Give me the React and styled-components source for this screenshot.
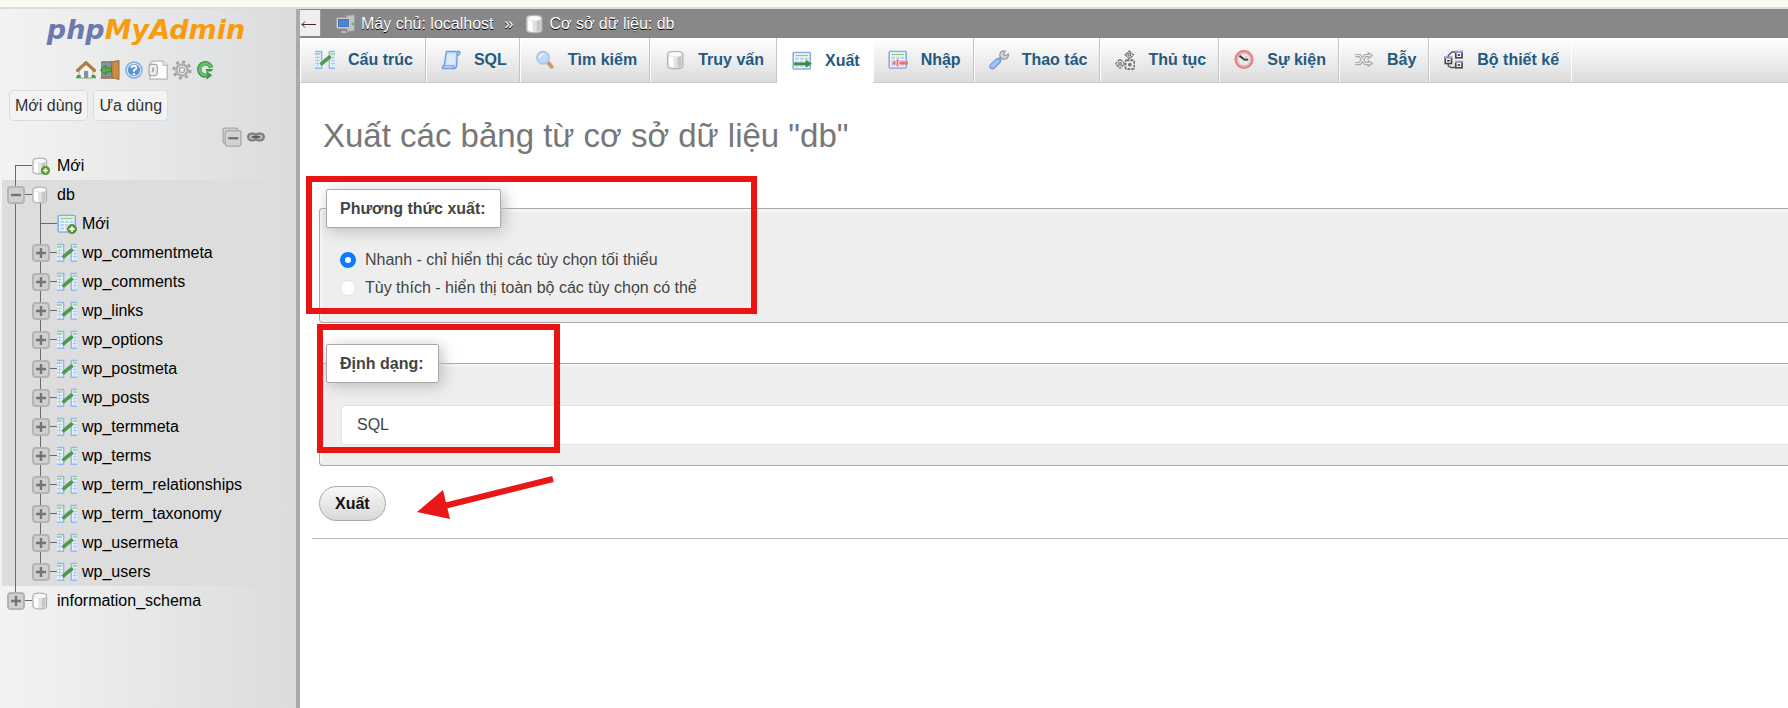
import React from "react";
import styled, { createGlobalStyle } from "styled-components";

const GlobalStyle = createGlobalStyle`
  *, *::before, *::after { box-sizing: border-box; }
  body {
    margin: 0;
    background: #fff;
    color: #444;
    font-family: "Liberation Sans", Arial, sans-serif;
    font-size: 16px;
    line-height: 20px;
  }
  a { color: inherit; text-decoration: none; }
  button, input, select { font: inherit; }
`;

/* ---------- page frame ---------- */

const Page = styled.div`
  min-height: 100vh;
  display: flex;
  flex-direction: column;
  overflow: hidden;
`;

const TopStrip = styled.div`
  height: 9px;
  background: #f9fbf1;
  border-bottom: 2px solid #dcded8;
`;

const Body = styled.div`
  flex: 1;
  display: flex;
`;

const Sidebar = styled.nav`
  flex: none;
  width: 300px;
  border-right: 4px solid #aaa;
  background: linear-gradient(to right, #f3f3f3, #dadcdd);
  color: #000;
`;

const Main = styled.main`
  flex: 1;
  min-width: 0;
`;

/* ---------- sidebar ---------- */

const Logo = styled.a`
  display: block;
  padding: 0 4px 0 0;
  text-align: center;
  font: italic 700 27px/42px "DejaVu Sans", sans-serif;
  color: #6c78af;
  span { color: #f89c0e; }
`;

const QuickLinks = styled.div`
  display: flex;
  justify-content: center;
  gap: 4px;
  padding: 9px 4px 0 0;
  a { display: flex; }
`;

const PillRow = styled.div`
  display: flex;
  gap: 5px;
  padding: 10px 9px 0;
`;

const Pill = styled.button`
  height: 31px;
  padding: 0 5px;
  border: 1px solid #dcdcdc;
  border-radius: 4px;
  background: #f3f3f3;
  color: #333;
  cursor: pointer;
`;

const TreeTools = styled.div`
  display: flex;
  justify-content: flex-end;
  align-items: center;
  gap: 5px;
  padding: 6px 31px 4px 0;
  a { display: flex; }
`;

const lineColor = "#6a6a6a";

const Tree = styled.ul`
  list-style: none;
  margin: 0;
  padding: 0;
`;

const OpenBranch = styled.li`
  margin: 0 24px 0 2px;
  background: #dddddd;
`;

const SubTree = styled.ul`
  list-style: none;
  margin: 0;
  padding: 0 0 0 5px;
  background: linear-gradient(${lineColor}, ${lineColor}) 13px 0 / 1px 100% no-repeat;
`;

const Row = styled.div`
  display: flex;
  align-items: center;
  height: 29px;
  padding-left: ${(p) => p.$indent}px;
`;

const spans = {
  full: "0 / 1px 100%",
  top: "0 / 1px 50%",
  bottom: "100% / 1px 50%",
};

const Joint = styled.span`
  display: flex;
  align-items: center;
  width: 25px;
  height: 29px;
  background:
    linear-gradient(${lineColor}, ${lineColor}) 8px ${(p) => spans[p.$span]} no-repeat,
    linear-gradient(${lineColor}, ${lineColor}) 8px 14px / 17px 1px no-repeat;
`;

const NodeIcon = styled.span`
  display: flex;
  align-items: center;
  width: 25px;
  height: 29px;
  ${(p) =>
    p.$stem &&
    `background: linear-gradient(${lineColor}, ${lineColor}) 8px 100% / 1px 50% no-repeat;`}
`;

const Expander = styled.button`
  display: flex;
  align-items: center;
  justify-content: center;
  width: 18px;
  height: 18px;
  padding: 0;
  border: 2px solid #b4b4b4;
  border-radius: 4px;
  background: #d0d0d0;
  cursor: pointer;
`;

/* ---------- header ---------- */

const Crumbs = styled.div`
  display: flex;
  align-items: center;
  height: 29px;
  background: #888;
  color: #fff;
  text-shadow: 0 1px 0 #000;
`;

const BackButton = styled.button`
  align-self: flex-start;
  width: 21px;
  height: 26px;
  margin: 1px 15px 0 0;
  padding: 0;
  border: 0;
  border-right: 1px solid #999;
  background: #eee;
  color: #502030;
  cursor: pointer;
  svg { display: block; }
`;

const Crumb = styled.a`
  display: flex;
  align-items: center;
  gap: 5px;
`;

const CrumbSep = styled.span`
  padding: 0 11px;
`;

const TabBar = styled.ul`
  display: flex;
  list-style: none;
  margin: 0;
  padding: 0;
  height: 45px;
  background: linear-gradient(#ffffff, #dcdcdd);
  border-bottom: 1px solid #ccc;
`;

const Tab = styled.li`
  display: flex;
  height: ${(p) => (p.$active ? 45 : 44)}px;
  border-left: 1px solid #fff;
  border-right: 1px solid ${(p) => (p.$active ? "#fff" : "#c4c4c4")};
  background: ${(p) => (p.$active ? "#fff" : "transparent")};
  &:last-child { border-right-color: #fff; }
  a {
    display: flex;
    align-items: center;
    gap: 13px;
    padding: 0 12px 0 14px;
    color: #235a81;
    font-weight: bold;
    white-space: nowrap;
  }
`;

/* ---------- export form ---------- */

const Content = styled.form`
  position: relative;
  padding: 0 0 0 12px;
`;

const Title = styled.h2`
  margin: 0;
  padding: 32px 11px 0;
  font-size: 33px;
  line-height: 42px;
  font-weight: 400;
  color: #777;
`;

const Panel = styled.fieldset`
  min-width: 0;
  margin: ${(p) => p.$gap}px 0 0 7px;
  padding: ${(p) => p.$top}px 0 ${(p) => p.$bottom}px 6px;
  border: 1px solid #aaa;
  border-right: 0;
  border-radius: 4px 0 0 4px;
  background: #eee;
  box-shadow: inset 2px 3px 0 #f5f5f5;
`;

const Legend = styled.legend`
  padding: 0 14px 0 13px;
  border: 1px solid #aaa;
  border-radius: 2px;
  background: #fff;
  box-shadow: 3px 3px 15px #bbb;
  font-weight: bold;
  line-height: 37px;
`;

const Choice = styled.label`
  display: flex;
  align-items: center;
  gap: 9px;
  height: 28px;
  padding-left: 14px;
`;

const Radio = styled.input`
  appearance: none;
  width: 16px;
  height: 16px;
  margin: 0;
  border: 1px solid #e4e4e4;
  border-radius: 50%;
  background: #fff;
  &:checked { border: 5px solid #0d7bff; }
`;

const FormatSelect = styled.select`
  appearance: none;
  display: block;
  width: calc(100% - 15px);
  height: 40px;
  margin-left: 15px;
  padding: 0 15px;
  border: 1px solid #e2e4e6;
  border-right: 0;
  border-radius: 4px 0 0 4px;
  background: #fff;
  color: #444;
`;

const SubmitRow = styled.div`
  padding: 20px 0 17px 7px;
  border-bottom: 1px solid #bbb;
`;

const Submit = styled.button`
  display: block;
  height: 35px;
  padding: 0 15px;
  border: 1px solid #aaa;
  border-radius: 18px;
  background: linear-gradient(#f8f8f8, #d8d8d8);
  color: #111;
  font-weight: bold;
  cursor: pointer;
`;

/* ---------- red call-outs over the form ---------- */

const Frame = styled.div`
  position: absolute;
  left: ${(p) => p.$x}px;
  top: ${(p) => p.$y}px;
  width: ${(p) => p.$w}px;
  height: ${(p) => p.$h}px;
  border: 6px solid #ec1313;
  pointer-events: none;
`;

const Arrow = styled.svg`
  position: absolute;
  left: 116px;
  top: 390px;
  pointer-events: none;
`;

/* ---------- icons ---------- */

const Icon = ({ size = 20, children }) => (
  <svg width={size} height={size} viewBox="0 0 16 16" fill="none" aria-hidden="true">
    {children}
  </svg>
);

const Cylinder = ({ x = 1.5 }) => (
  <g transform={`translate(${x} 0)`}>
    <path d="M.6 3.2C.6 .3 12.8 .3 12.8 3.2V12.8C12.8 15.8 .6 15.8 .6 12.8Z" fill="#e2e2e2" stroke="#b4b4b4" />
    <path d="M1.6 4.6Q3 5.5 5.4 5.7V14.2Q2.4 13.9 1.6 12.6Z" fill="#fff" />
    <path d="M8.6 5.6Q10.8 5.3 11.8 4.5V12.8Q10.8 13.8 8.6 14.1Z" fill="#c6c6c6" />
    <ellipse cx="6.7" cy="3.4" rx="5.3" ry="1.8" fill="#f9f9f9" />
  </g>
);

const Plus = () => (
  <g>
    <circle cx="12" cy="12" r="3.6" fill="#5d9c35" stroke="#3f7d22" strokeWidth=".6" />
    <path d="M12 9.9v4.2M9.9 12h4.2" stroke="#fff" strokeWidth="1.5" />
  </g>
);

const Grid = () => (
  <g>
    <rect x="1" y="1.2" width="13.6" height="13.2" rx=".8" fill="#fff" stroke="#86abe2" strokeWidth="1.3" />
    <path d="M2.6 3.6h10.4" stroke="#8ccf6e" strokeWidth="1.2" />
    <rect x="2.4" y="5.2" width="10.8" height="7.8" fill="#bfd4f5" />
    <path d="M2.4 7.6h10.8M2.4 10.2h10.8M6 5.2v7.8M9.6 5.2v7.8" stroke="#f4f8ff" strokeWidth=".8" />
  </g>
);

const DbIcon = () => <Icon><Cylinder /></Icon>;
const TreeDbIcon = () => <Icon size={18}><Cylinder x={0.2} /></Icon>;
const NewDbIcon = () => <Icon size={18}><Cylinder x={0.2} /><Plus /></Icon>;
const NewTableIcon = () => <Icon><Grid /><Plus /></Icon>;

const StructureIcon = () => (
  <Icon>
    <path d="M0 1.2h5.3V14.6H0M16 1.2h-4.6V14.6H16" fill="#e6f0fd" stroke="#93b7ea" strokeWidth="1.1" />
    <path d="M0 3.2h3.8M12.6 3.2H16" stroke="#8ed070" strokeWidth="1.3" />
    <path d="M0 6h4M0 8.4h4M0 10.8h4M2 4.8v8.6M12.7 6H16M12.7 8.4H16M12.7 10.8H16M14.3 4.8v8.6" stroke="#aecaf0" strokeWidth=".7" />
    <path d="M5.4 10.9 8 8.6 11.6 5.8" stroke="#4f9a4a" strokeWidth="2.9" strokeLinecap="round" strokeLinejoin="round" />
  </Icon>
);

const SqlIcon = () => (
  <Icon>
    <path d="M4.2 1.2H14.6Q16 2.6 14.2 4H13L12.4 13Q12 14.8 10.2 14.8H1.4Q.6 13 2.6 12.4Z" fill="#c4dcfb" stroke="#6d9de0" strokeWidth="1.1" strokeLinejoin="round" />
    <path d="M5.4 3H11.6L10.8 12H4.2Z" fill="#dcebff" />
    <path d="M2.2 12.6H10Q9.8 14.4 11 14.6M12.8 4Q12.4 2 14 1.4" stroke="#6d9de0" strokeWidth=".9" />
  </Icon>
);

const SearchIcon = () => (
  <Icon>
    <path d="M10.2 9.8 13.4 13.4" stroke="#c99a5c" strokeWidth="3" strokeLinecap="round" />
    <circle cx="6.4" cy="6.2" r="4.9" fill="#bcdcfb" stroke="#b3c3e4" strokeWidth="1.3" />
    <path d="M3.6 6Q4 3.4 6.6 3.2" stroke="#eaf5ff" strokeWidth="1.4" strokeLinecap="round" />
  </Icon>
);

const ExportIcon = () => (
  <Icon>
    <Grid />
    <path d="M1.6 9.2H11V7L15.9 10.2 11 13.4V11.4H1.6Z" fill="#3f8a3a" />
  </Icon>
);

const ImportIcon = () => (
  <Icon>
    <Grid />
    <path d="M16 9.2H8.4V7L3 10.4 8.4 13.6V11.6H16Z" fill="#fa6b6b" />
    <path d="M6.4 8.6v3.8M8.6 9v3" stroke="#fff" strokeWidth=".7" />
  </Icon>
);

const WrenchIcon = () => (
  <Icon>
    <path d="M7.6 8.4 11 5" stroke="#a3a3a3" strokeWidth="3" />
    <path d="M13 .8Q9.2.2 8.6 3.6 8.8 7 12 7.4 15.8 7 15.6 3L13 4.6 11.6 3.4Z" fill="#d4d4d4" stroke="#999" strokeWidth=".9" strokeLinejoin="round" />
    <path d="M2.8 13 7 9" stroke="#6f95dc" strokeWidth="5" strokeLinecap="round" />
    <path d="M2.8 12.8 7 8.8" stroke="#a3c0f2" strokeWidth="3.2" strokeLinecap="round" />
  </Icon>
);

const RoutinesIcon = () => (
  <Icon>
    <g stroke="#777" strokeWidth="1" fill="#eee">
      <path d="M11.4.8 13 2.4 14.8 3.8 13.2 5.6 11.4 7 9.8 5.6 8 3.8 9.8 2.4Z" strokeDasharray="2.4 .5" />
      <path d="M4 7.6 5.8 9 7.6 11 5.8 13 4 14.6 2.2 13 .6 11 2.2 9Z" strokeDasharray="2.4 .5" />
      <rect x="8.4" y="8.2" width="7" height="7" rx="1" strokeDasharray="2.2 .8" strokeWidth="1.5" />
      <circle cx="11.4" cy="3.8" r="1.1" />
      <circle cx="4" cy="11.1" r="1.1" />
      <circle cx="11.9" cy="11.7" r="1" fill="#777" />
    </g>
  </Icon>
);

const EventsIcon = () => (
  <Icon>
    <circle cx="8" cy="7.6" r="6.7" fill="#e6e9e4" stroke="#f08080" strokeWidth="1.9" />
    <circle cx="8" cy="7.6" r="5.2" stroke="#a9b3ac" strokeWidth=".7" />
    <path d="M4.4 4.6 8.2 7.6H11.4" stroke="#333" strokeWidth="1.4" />
    <path d="M8 7.6 10.4 5" stroke="#e88" strokeWidth=".7" />
  </Icon>
);

const TriggersIcon = () => (
  <Icon>
    <g stroke="#a9a9a9" strokeWidth="2.6">
      <path d="M1 4.4H4.6L9 10.8H11.6M1 10.8H4.6L9 4.4H11.6" />
      <path d="M11.4 2.2 14.6 4.4 11.4 6.8ZM11.4 8.6 14.6 10.8 11.4 13Z" fill="#eee" strokeWidth="1" />
    </g>
    <path d="M1 4.4H4.6L9 10.8H12M1 10.8H4.6L9 4.4H12" stroke="#ededed" strokeWidth=".9" />
  </Icon>
);

const DesignerIcon = () => (
  <Icon>
    <path d="M3.4 6V4.4L6.4 1.6H9M3.4 11V12.6L5.6 14H9" stroke="#555" strokeWidth="1.1" />
    {[[1, 6], [9.4, 1.4], [9.4, 9.4]].map(([x, y]) => (
      <g key={`${x}-${y}`}>
        <rect x={x} y={y} width="5" height="4.8" fill="#fff" stroke="#444" strokeWidth="1.3" />
        <path d={`M${x - 0.6} ${y}h6.2`} stroke="#a79bdc" strokeWidth="1.6" />
        <path d={`M${x + 1.5} ${y + 2.6}h2`} stroke="#222" strokeWidth="1.2" />
      </g>
    ))}
  </Icon>
);

const HomeIcon = () => (
  <Icon>
    <path d="M0 13.4Q4 11 8 12.4 12 11 16 13.4V14.6H0Z" fill="#55a83d" />
    <path d="M2.6 7.4 8 2.6 13.4 7.4V14.4H2.6Z" fill="#f3f3f3" stroke="#999" strokeWidth=".6" />
    <rect x="6.4" y="8.8" width="3.4" height="5.6" fill="#8c8f96" />
    <path d="M1.2 8.4 8 2.2 14.8 8.4" stroke="#b37d3e" strokeWidth="2.6" strokeLinejoin="round" strokeLinecap="round" />
    <path d="M0.8 13h3M12.4 13h3" stroke="#4c9a36" strokeWidth="2.2" />
  </Icon>
);

const ExitIcon = () => (
  <Icon>
    <path d="M1.4 1.4H9.6V13.6H1.4Z" fill="#8b9099" stroke="#6f747c" strokeWidth=".8" />
    <path d="M.6 14.4H11" stroke="#a07a4a" strokeWidth="1.4" />
    <path d="M9.6 1.4 15.2.4V15.6L9.6 14Z" fill="#c98d4b" stroke="#9b6a32" strokeWidth=".8" />
    <path d="M.2 8 4.6 4.2V6.4H9.2V9.6H4.6V11.8Z" fill="#4fb04a" stroke="#2f8430" strokeWidth=".7" />
  </Icon>
);

const HelpIcon = () => (
  <Icon>
    <circle cx="8" cy="8" r="6.6" fill="#5f93d6" stroke="#8db2e4" strokeWidth="1" />
    <circle cx="8" cy="8" r="5.4" stroke="#d8e7f9" strokeWidth="1" />
    <path d="M6 6.4Q6.2 4.6 8 4.6 10 4.7 9.9 6.3 9.8 7.3 8 8.1V9.3" stroke="#fff" strokeWidth="1.5" />
    <circle cx="8" cy="11.3" r=".95" fill="#fff" />
  </Icon>
);

const DocsIcon = () => (
  <Icon>
    <path d="M4.4.8H12L15.4 4.2V15.2H1.6V3.4Q2.6.8 4.4.8Z" fill="#fcfcfc" stroke="#b5b5b5" />
    <path d="M12 .8V4.2H15.4" stroke="#b5b5b5" strokeWidth=".8" fill="#eee" />
    <rect x=".8" y="3.4" width="6.6" height="9" rx="2" fill="#efefef" stroke="#a8a8a8" />
    <path d="M4 6v3.8" stroke="#9a9a9a" strokeWidth="1.2" />
  </Icon>
);

const GearIcon = () => (
  <Icon>
    <circle cx="8" cy="8" r="6.6" stroke="#a0a0a0" strokeWidth="2.2" strokeDasharray="2.4 2.784" />
    <circle cx="8" cy="8" r="4.5" fill="#e5e5e5" stroke="#adadad" strokeWidth="2" />
    <circle cx="8" cy="8" r="2" fill="#f5f5f5" stroke="#999" strokeWidth=".9" />
  </Icon>
);

const ReloadIcon = () => (
  <Icon>
    <path d="M12.2 6.2A4.9 4.9 0 1 0 8.4 12.4" stroke="#3f9a45" strokeWidth="3.6" />
    <path d="M12 6A4.7 4.7 0 1 0 8.4 12.2" stroke="#6cc46c" strokeWidth="1.8" />
    <path d="M7.6 7.2H13.8L12.4 9.2H8.6ZM8.4 8.8 13 12.2 8.4 15.8Z" fill="#3f9a45" />
  </Icon>
);

const CollapseIcon = () => (
  <Icon>
    <rect x=".8" y=".8" width="12" height="12.4" rx="2" fill="#d6d6d6" stroke="#a8a8a8" />
    <rect x="2.6" y="2.8" width="12.6" height="12.4" rx="2" fill="#d2d2d2" stroke="#a8a8a8" />
    <path d="M5 9h8" stroke="#707070" strokeWidth="1.8" />
  </Icon>
);

const LinkIcon = () => (
  <Icon size={18}>
    <rect x="1" y="5" width="7.4" height="6" rx="3" fill="#bbb" stroke="#808080" strokeWidth="2" />
    <rect x="7.6" y="5" width="7.4" height="6" rx="3" fill="#bbb" stroke="#808080" strokeWidth="2" />
    <path d="M4.4 8h7.2" stroke="#555" strokeWidth="1.6" />
  </Icon>
);

const ServerIcon = () => (
  <Icon>
    <path d="M8.4 1.4 14.6.8V13.4L9 13.8Z" fill="#c3c3c3" stroke="#a5a5a5" strokeWidth=".7" />
    <path d="M12.6 7h1.6v2h-1.6Z" fill="#53b84e" />
    <rect x=".7" y="3.2" width="10.6" height="8.2" rx=".8" fill="#e4e4e4" stroke="#b5b5b5" strokeWidth=".7" />
    <rect x="2" y="4.4" width="8" height="5.8" fill="#4e83d0" stroke="#2e5ea8" strokeWidth=".6" />
    <path d="M4 14.6Q6 12.8 8.4 14.6Z" fill="#ddd" stroke="#bbb" strokeWidth=".8" />
  </Icon>
);

const SignIcon = ({ open }) => (
  <svg width="12" height="12" viewBox="0 0 12 12" aria-hidden="true">
    <path d={open ? "M1 6h10" : "M1 6h10M6 1v10"} stroke="#747474" strokeWidth="2.4" />
  </svg>
);

/* ---------- data ---------- */

const TABLES = [
  "wp_commentmeta", "wp_comments", "wp_links", "wp_options", "wp_postmeta", "wp_posts",
  "wp_termmeta", "wp_terms", "wp_term_relationships", "wp_term_taxonomy", "wp_usermeta", "wp_users",
];

const TABS = [
  ["Cấu trúc", StructureIcon], ["SQL", SqlIcon], ["Tìm kiếm", SearchIcon], ["Truy vấn", DbIcon],
  ["Xuất", ExportIcon], ["Nhập", ImportIcon], ["Thao tác", WrenchIcon], ["Thủ tục", RoutinesIcon],
  ["Sự kiện", EventsIcon], ["Bẫy", TriggersIcon], ["Bộ thiết kế", DesignerIcon],
];

const QUICK = [
  ["Trang chủ", HomeIcon], ["Đăng xuất", ExitIcon], ["Trợ giúp", HelpIcon],
  ["Tài liệu", DocsIcon], ["Cài đặt", GearIcon], ["Tải lại", ReloadIcon],
];

const TreeRow = ({ indent, span, expander, open, icon, stem, label }) => (
  <Row $indent={indent}>
    <Joint $span={span}>
      {expander && (
        <Expander type="button" aria-label={label} aria-expanded={!!open}>
          <SignIcon open={open} />
        </Expander>
      )}
    </Joint>
    <NodeIcon $stem={stem}>{icon}</NodeIcon>
    <a href="#">{label}</a>
  </Row>
);

export default function App() {
  return (
    <Page>
      <GlobalStyle />
      <TopStrip />
      <Body>
        <Sidebar>
          <Logo href="#">php<span>MyAdmin</span></Logo>
          <QuickLinks>
            {QUICK.map(([name, Pic]) => (
              <a href="#" key={name} aria-label={name}><Pic /></a>
            ))}
          </QuickLinks>
          <PillRow>
            <Pill type="button">Mới dùng</Pill>
            <Pill type="button">Ưa dùng</Pill>
          </PillRow>
          <TreeTools>
            <a href="#" aria-label="Thu gọn"><CollapseIcon /></a>
            <a href="#" aria-label="Liên kết"><LinkIcon /></a>
          </TreeTools>
          <Tree>
            <li>
              <TreeRow indent={7} span="bottom" icon={<NewDbIcon />} label="Mới" />
            </li>
            <OpenBranch>
              <TreeRow indent={5} span="full" expander open icon={<TreeDbIcon />} stem label="db" />
              <SubTree>
                <li>
                  <TreeRow indent={25} span="full" icon={<NewTableIcon />} label="Mới" />
                </li>
                {TABLES.map((name, i) => (
                  <li key={name}>
                    <TreeRow
                      indent={25}
                      span={i === TABLES.length - 1 ? "top" : "full"}
                      expander
                      icon={<StructureIcon />}
                      label={name}
                    />
                  </li>
                ))}
              </SubTree>
            </OpenBranch>
            <li>
              <TreeRow indent={7} span="top" expander icon={<TreeDbIcon />} label="information_schema" />
            </li>
          </Tree>
        </Sidebar>
        <Main>
          <Crumbs>
            <BackButton type="button" aria-label="Ẩn bảng điều hướng">
              <svg width="20" height="26" viewBox="0 0 20 26" fill="none">
                <path d="M2 14.5H16M5 11.5 2 14.5 5 17.5" stroke="currentColor" />
              </svg>
            </BackButton>
            <Crumb href="#"><ServerIcon />Máy chủ: localhost</Crumb>
            <CrumbSep>»</CrumbSep>
            <Crumb href="#"><DbIcon />Cơ sở dữ liệu: db</Crumb>
          </Crumbs>
          <TabBar>
            {TABS.map(([name, Pic]) => (
              <Tab key={name} $active={name === "Xuất"}>
                <a href="#"><Pic />{name}</a>
              </Tab>
            ))}
          </TabBar>
          <Content onSubmit={(e) => e.preventDefault()}>
            <Title>Xuất các bảng từ cơ sở dữ liệu "db"</Title>
            <Panel $gap={32} $top={18} $bottom={20}>
              <Legend>Phương thức xuất:</Legend>
              <Choice>
                <Radio type="radio" name="method" defaultChecked />
                Nhanh - chỉ hiển thị các tùy chọn tối thiểu
              </Choice>
              <Choice>
                <Radio type="radio" name="method" />
                Tùy thích - hiển thị toàn bộ các tùy chọn có thể
              </Choice>
            </Panel>
            <Panel $gap={21} $top={22} $bottom={20}>
              <Legend>Định dạng:</Legend>
              <FormatSelect aria-label="Định dạng">
                <option>SQL</option>
              </FormatSelect>
            </Panel>
            <SubmitRow>
              <Submit type="submit">Xuất</Submit>
            </SubmitRow>
            <Frame $x={6} $y={93} $w={451} $h={138} />
            <Frame $x={17} $y={241} $w={243} $h={129} />
            <Arrow width="140" height="50" viewBox="0 0 140 50">
              <path d="M28 33 137 6" stroke="#e81818" strokeWidth="6" />
              <path d="M1 39 27 17 34 46Z" fill="#e81818" />
            </Arrow>
          </Content>
        </Main>
      </Body>
    </Page>
  );
}
